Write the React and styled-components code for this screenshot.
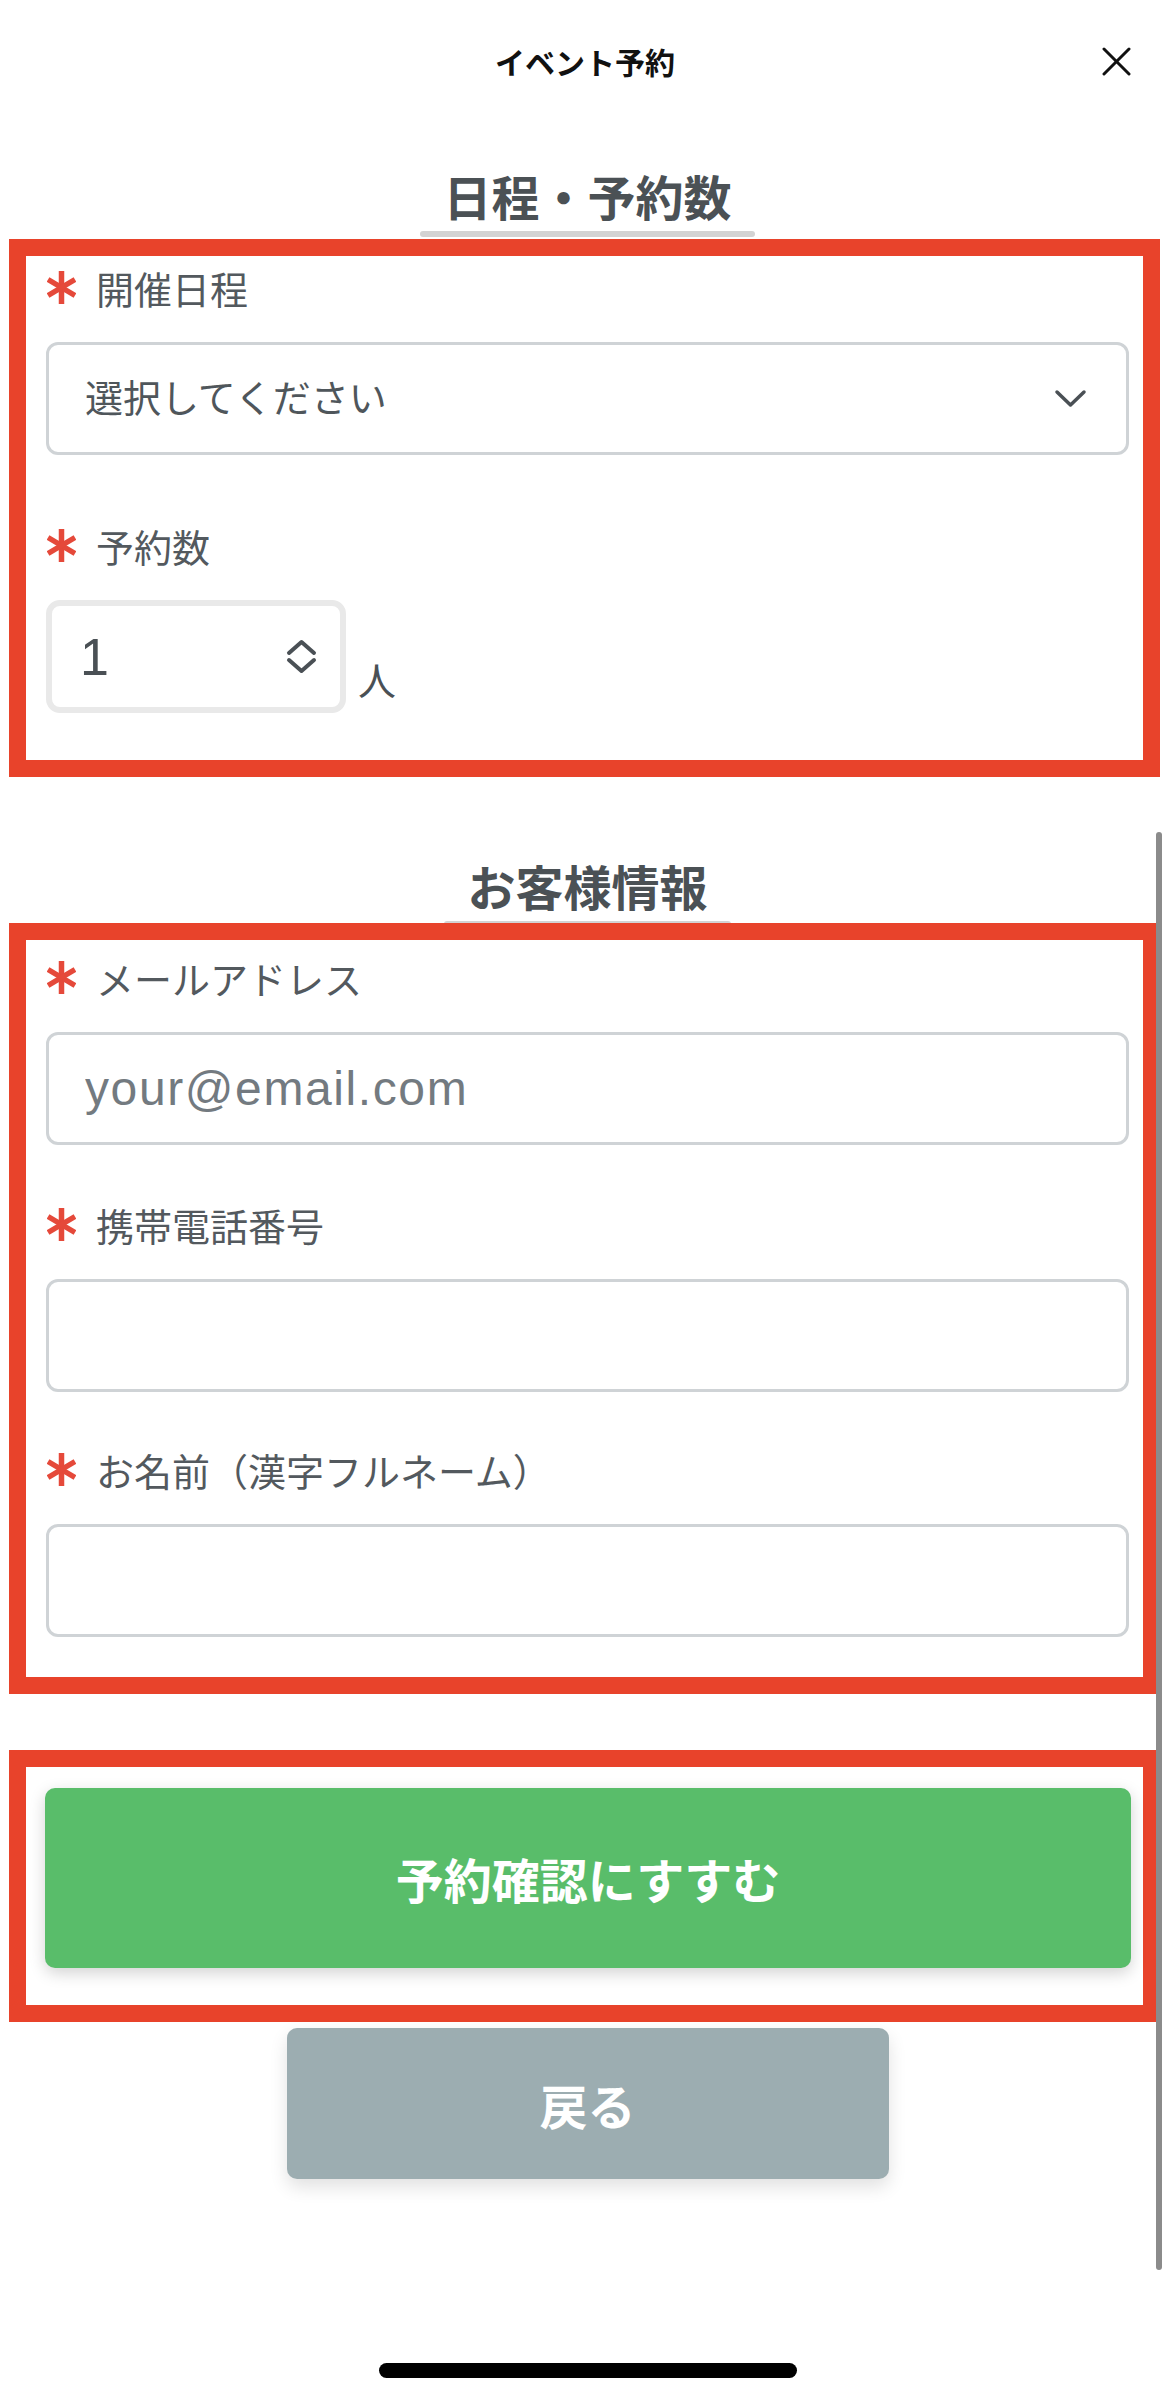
import React from 'react';
import styled, { createGlobalStyle } from 'styled-components';

const GlobalStyle = createGlobalStyle`
    html, body {
        margin: 0;
        padding: 0;
        background: #ffffff;
    }
    body {
        font-family: "Noto Sans CJK JP", "Noto Sans", sans-serif;
        color: #53595e;
    }
    * {
        box-sizing: border-box;
    }
`;

const Page = styled.div`
    position: relative;
    width: 1170px;
    min-height: 2401px;
    background: #ffffff;
`;

const Header = styled.header`
    height: 122px;
    display: grid;
    grid-template-columns: 1fr auto 1fr;
    align-items: center;
`;

const Title = styled.h1`
    grid-column: 2;
    margin: 0;
    font-size: 30px;
    font-weight: 700;
    color: #111111;
    line-height: 1;
`;

const CloseButton = styled.button`
    justify-self: end;
    margin-right: 39px;
    width: 29px;
    height: 29px;
    padding: 0;
    border: none;
    background: none;
    display: flex;
    cursor: pointer;
`;

const Main = styled.main`
    padding: 0 10px 0 9px;
    display: flex;
    flex-direction: column;
`;

const HeadingRow = styled.div`
    display: flex;
    justify-content: center;
    margin-top: ${p => p.$top}px;
    padding-left: 6px;
`;

const Heading = styled.h2`
    margin: 0;
    padding: 0 23px;
    font-size: 48px;
    font-weight: 700;
    line-height: 60px;
    color: #4b5155;

    &::after {
        content: '';
        display: block;
        height: 6px;
        margin: 6px -23px 0;
        border-radius: 3px;
        background: #d3d3d3;
    }
`;

const Frame = styled.section`
    border: 17px solid #e8432b;
    margin-top: ${p => p.$top}px;
    padding: ${p => p.$pad};
    display: flex;
    flex-direction: column;
`;

const Field = styled.div`
    display: flex;
    flex-direction: column;
    margin-top: ${p => p.$top || 0}px;
`;

const LabelRow = styled.label`
    display: flex;
    align-items: center;
    height: 53px;
    font-size: 38px;
    line-height: 53px;
    color: #53595e;
`;

const Required = styled.svg`
    width: 29px;
    height: 35px;
    margin: 0 20px 0 1px;
    flex: none;
`;

const SelectBox = styled.div`
    margin-top: 28px;
    height: 113px;
    border: 3px solid #cfd3d6;
    border-radius: 12px;
    padding: 0 39px 0 36px;
    display: flex;
    align-items: center;
    justify-content: space-between;
    font-size: 38px;
    color: #4f565b;
    cursor: pointer;
`;

const SelectText = styled.span`
    margin-bottom: 6px;
`;

const NumberRow = styled.div`
    margin-top: 28px;
    display: flex;
    align-items: flex-end;
`;

const NumberBox = styled.div`
    width: 300px;
    height: 113px;
    border: 6px solid #e9e9e9;
    border-radius: 14px;
    padding: 0 23px 0 28px;
    display: flex;
    align-items: center;
    justify-content: space-between;
`;

const NumberInput = styled.input`
    width: 120px;
    border: none;
    outline: none;
    padding: 0;
    background: transparent;
    font-family: "Liberation Sans", Arial, sans-serif;
    font-size: 52px;
    color: #4a5055;
`;

const Unit = styled.span`
    margin: 0 0 8px 12px;
    font-size: 38px;
    line-height: 52px;
    color: #4a5055;
`;

const TextInput = styled.input`
    margin-top: 28px;
    width: 100%;
    height: 113px;
    border: 3px solid #cfd3d6;
    border-radius: 12px;
    padding: 0 36px;
    outline: none;
    background: #ffffff;
    font-family: "Liberation Sans", Arial, sans-serif;
    font-size: 48px;
    letter-spacing: 1.6px;
    color: #3f454a;

    &::placeholder {
        color: #737a80;
    }
`;

const Button = styled.button`
    border: none;
    border-radius: 10px;
    font-family: "Noto Sans CJK JP", sans-serif;
    font-size: 48px;
    font-weight: 700;
    color: #ffffff;
    cursor: pointer;
`;

const PrimaryButton = styled(Button)`
    height: 180px;
    width: 100%;
    background: #59bd6a;
    box-shadow: 0 5px 16px rgba(0, 0, 0, 0.18);
`;

const BackButton = styled(Button)`
    align-self: center;
    margin: 6px 0 0 6px;
    width: 602px;
    height: 151px;
    background: #9cadb1;
    box-shadow: 0 8px 18px rgba(0, 0, 0, 0.12);
`;

const HomeIndicator = styled.div`
    align-self: center;
    margin: 184px 0 0 6px;
    width: 418px;
    height: 15px;
    border-radius: 8px;
    background: #000000;
`;

const Scrollbar = styled.div`
    position: absolute;
    left: 1156px;
    top: 832px;
    width: 6px;
    height: 1438px;
    border-radius: 3px;
    background: #8b8b8b;
`;

const Asterisk = () => (
    <Required viewBox="0 0 29 35">
        <g stroke="#e5493a" strokeWidth="5.5" strokeLinecap="butt">
            <line x1="14.5" y1="1" x2="14.5" y2="34" />
            <line x1="1" y1="9.5" x2="28" y2="25.5" />
            <line x1="1" y1="25.5" x2="28" y2="9.5" />
        </g>
    </Required>
);

const Label = ({ children }) => (
    <LabelRow>
        <Asterisk />
        {children}
    </LabelRow>
);

const App = () => {
    return (
        <Page>
            <GlobalStyle />
            <Header>
                <Title>イベント予約</Title>
                <CloseButton aria-label="閉じる">
                    <svg width="29" height="29" viewBox="0 0 29 29">
                        <g stroke="#111" strokeWidth="3" strokeLinecap="round">
                            <line x1="2" y1="2" x2="27" y2="27" />
                            <line x1="27" y1="2" x2="2" y2="27" />
                        </g>
                    </svg>
                </CloseButton>
            </Header>

            <Main>
                <HeadingRow $top={43}>
                    <Heading>日程・予約数</Heading>
                </HeadingRow>

                <Frame $top={2} $pad="5px 14px 47px 20px">
                    <Field>
                        <Label>開催日程</Label>
                        <SelectBox>
                            <SelectText>選択してください</SelectText>
                            <svg width="33" height="19" viewBox="0 0 33 19">
                                <path d="M3 3 L16.5 16 L30 3" fill="none" stroke="#4a5055" strokeWidth="3.5" strokeLinecap="round" strokeLinejoin="round" />
                            </svg>
                        </SelectBox>
                    </Field>
                    <Field $top={64}>
                        <Label>予約数</Label>
                        <NumberRow>
                            <NumberBox>
                                <NumberInput type="text" defaultValue="1" />
                                <svg width="31" height="35" viewBox="0 0 31 35">
                                    <g fill="none" stroke="#4a5055" strokeWidth="4" strokeLinecap="round" strokeLinejoin="round">
                                        <path d="M3 14 L15.5 3 L28 14" />
                                        <path d="M3 21 L15.5 32 L28 21" />
                                    </g>
                                </svg>
                            </NumberBox>
                            <Unit>人</Unit>
                        </NumberRow>
                    </Field>
                </Frame>

                <HeadingRow $top={78}>
                    <Heading>お客様情報</Heading>
                </HeadingRow>

                <Frame $top={-4} $pad="11px 14px 40px 20px">
                    <Field>
                        <Label>メールアドレス</Label>
                        <TextInput type="email" placeholder="your@email.com" />
                    </Field>
                    <Field $top={53}>
                        <Label>携帯電話番号</Label>
                        <TextInput type="tel" />
                    </Field>
                    <Field $top={51}>
                        <Label>お名前（漢字フルネーム）</Label>
                        <TextInput type="text" />
                    </Field>
                </Frame>

                <Frame $top={56} $pad="21px 12px 37px 19px">
                    <PrimaryButton>予約確認にすすむ</PrimaryButton>
                </Frame>

                <BackButton>戻る</BackButton>
                <HomeIndicator />
            </Main>

            <Scrollbar />
        </Page>
    );
};

export default App;
